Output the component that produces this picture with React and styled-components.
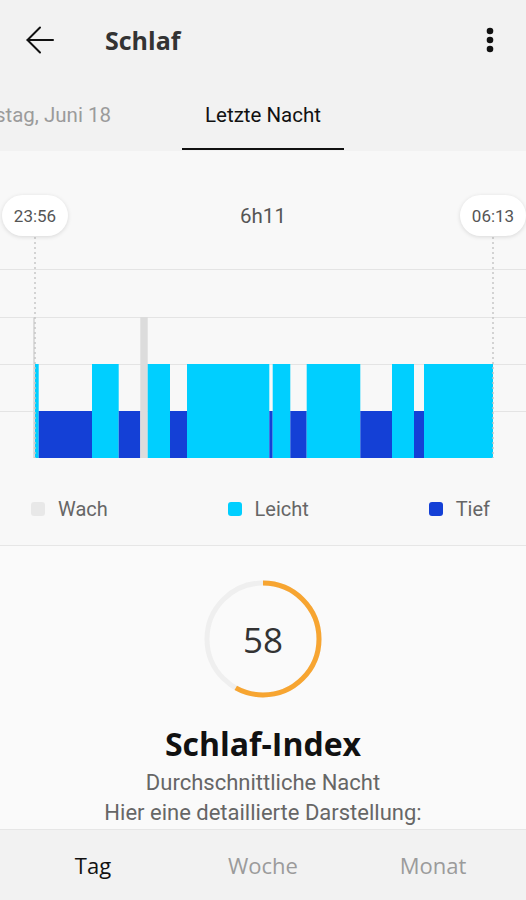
import { styled, createGlobalStyle } from "styled-components";

const GlobalStyle = createGlobalStyle`
    body{
        margin: 0;
        font-family: Roboto, "Liberation Sans", sans-serif;
        background: #f2f2f2;
    }
`;

// sleep phases, x positions in chart pixels
const segments = [
    [33, 35, "wach"],
    [35, 38.7, "light"],
    [38.7, 92, "deep"],
    [92, 118.7, "light"],
    [118.7, 140.3, "deep"],
    [140.3, 147.7, "wach"],
    [147.7, 170, "light"],
    [170, 187, "deep"],
    [187, 269.3, "light"],
    [269.3, 272.7, "deep"],
    [272.7, 290.3, "light"],
    [290.3, 306.7, "deep"],
    [306.7, 360.3, "light"],
    [360.3, 392, "deep"],
    [392, 414, "light"],
    [414, 424, "deep"],
    [424, 493, "light"],
];

const stage = {
    wach: { top: 80, color: "#dcdcdc" },
    light: { top: 127, color: "#00cfff" },
    deep: { top: 174, color: "#1440d6" },
};

const BASE = 221;
const gridLines = [32, 80, 127, 174];
const markers = [
    { x: 35, label: "23:56" },
    { x: 493, label: "06:13" },
];

const legend = [
    { label: "Wach", color: "#e8e8e8" },
    { label: "Leicht", color: "#00cfff" },
    { label: "Tief", color: "#1440d6" },
];

function BackArrow() {
    return (
        <svg width="28" height="28" viewBox="0 0 28 28" fill="none" stroke="#111" strokeWidth="2" strokeLinecap="round" strokeLinejoin="round">
            <path d="M27 14H1.5" />
            <path d="M14 1.5L1.5 14L14 26.5" />
        </svg>
    );
}

function MoreDots() {
    return (
        <svg width="8" height="26" viewBox="0 0 8 26" fill="#111">
            <circle cx="4" cy="4" r="3.3" />
            <circle cx="4" cy="13" r="3.3" />
            <circle cx="4" cy="22" r="3.3" />
        </svg>
    );
}

function SleepChart() {
    return (
        <svg width="526" height="225" viewBox="0 0 526 225" style={{ display: "block" }}>
            {gridLines.map(y => (
                <line key={y} x1="0" x2="526" y1={y + 0.5} y2={y + 0.5} stroke="#e4e4e4" strokeWidth="1" />
            ))}
            {segments.map(([x0, x1, s], i) => (
                <rect key={i} x={x0} y={stage[s].top} width={x1 - x0} height={BASE - stage[s].top} fill={stage[s].color} />
            ))}
            {markers.map(m => (
                <line key={m.x} x1={m.x} x2={m.x} y1="0" y2={BASE} stroke="#c4c4c4" strokeWidth="1.4" strokeDasharray="2 3" />
            ))}
        </svg>
    );
}

function ScoreRing({ value }) {
    const r = 56;
    const c = 2 * Math.PI * r;
    return (
        <RingWrap>
            <svg width="122" height="122" viewBox="0 0 122 122">
                <circle cx="61" cy="61" r={r} fill="none" stroke="#efefef" strokeWidth="5" />
                <circle cx="61" cy="61" r={r} fill="none" stroke="#f7a531" strokeWidth="5"
                    strokeDasharray={`${c * value / 100} ${c}`} transform="rotate(-90 61 61)" />
            </svg>
            <span>{value}</span>
        </RingWrap>
    );
}

export default function App() {
    return (
        <Screen>
            <GlobalStyle />
            <Header>
                <IconButton><BackArrow /></IconButton>
                <Title>Schlaf</Title>
                <IconButton $right><MoreDots /></IconButton>
            </Header>

            <TabBar>
                <TabSide>
                    <Tab>Dienstag, Juni 18</Tab>
                </TabSide>
                <Tab $active>Letzte Nacht</Tab>
                <div></div>
            </TabBar>

            <ChartSection>
                <MarkerRow>
                    <Duration>6h11</Duration>
                    {markers.map(m => (
                        <Pill key={m.label} style={{ left: m.x - 33 }}>{m.label}</Pill>
                    ))}
                </MarkerRow>
                <SleepChart />
                <Legend>
                    {legend.map(l => (
                        <LegendItem key={l.label}>
                            <Swatch $color={l.color} />
                            {l.label}
                        </LegendItem>
                    ))}
                </Legend>
            </ChartSection>

            <Summary>
                <ScoreRing value={58} />
                <SummaryTitle>Schlaf-Index</SummaryTitle>
                <SummaryText>Durchschnittliche Nacht</SummaryText>
                <SummaryText>Hier eine detaillierte Darstellung:</SummaryText>
            </Summary>

            <BottomNav>
                <NavItem $active>Tag</NavItem>
                <NavItem>Woche</NavItem>
                <NavItem>Monat</NavItem>
            </BottomNav>
        </Screen>
    );
}

const Screen = styled.div`
    width: 526px;
    height: 900px;
    display: flex;
    flex-direction: column;
    overflow: hidden;
    background: #f2f2f2;
`;

const Header = styled.header`
    height: 80px;
    display: flex;
    align-items: center;
    padding: 0 32px 0 26px;
    flex-shrink: 0;
`;

const IconButton = styled.div`
    display: flex;
    align-items: center;
    margin-left: ${p => (p.$right ? "auto" : "0")};
`;

const Title = styled.h1`
    margin: 0 0 0 51px;
    font-family: "Open Sans", sans-serif;
    font-weight: 700;
    font-size: 25px;
    color: #333;
`;

const TabBar = styled.nav`
    height: 71px;
    display: grid;
    grid-template-columns: minmax(0, 1fr) 162px minmax(0, 1fr);
    flex-shrink: 0;
    overflow: hidden;
`;

const TabSide = styled.div`
    display: flex;
    justify-content: flex-end;
    padding-right: 71px;
    min-width: 0;
`;

const Tab = styled.div`
    display: flex;
    align-items: center;
    justify-content: center;
    white-space: nowrap;
    font-size: 20.5px;
    color: ${p => (p.$active ? "#111" : "#9b9b9b")};
    border-bottom: 2px solid ${p => (p.$active ? "#111" : "transparent")};
    margin-bottom: 1px;
    padding-top: 2px;
`;

const ChartSection = styled.section`
    background: #f8f8f8;
    padding-top: 44px;
    border-bottom: 1px solid #e6e6e6;
    flex-shrink: 0;
`;

const MarkerRow = styled.div`
    position: relative;
    height: 42px;
    display: flex;
    align-items: center;
    justify-content: center;
`;

const Duration = styled.span`
    font-size: 20.5px;
    color: #555;
`;

const Pill = styled.span`
    position: absolute;
    top: 0;
    width: 66px;
    height: 41px;
    border-radius: 21px;
    background: #fff;
    box-shadow: 0 1px 4px rgba(0, 0, 0, 0.13);
    display: flex;
    align-items: center;
    justify-content: center;
    font-size: 17px;
    color: #555;
`;

const Legend = styled.div`
    height: 73px;
    padding: 10px 36px 0 31px;
    display: flex;
    align-items: center;
    justify-content: space-between;
`;

const LegendItem = styled.div`
    display: flex;
    align-items: center;
    gap: 13px;
    font-size: 20px;
    color: #666;
`;

const Swatch = styled.span`
    width: 14px;
    height: 14px;
    border-radius: 3px;
    background: ${p => p.$color};
`;

const Summary = styled.section`
    flex: 1;
    min-height: 0;
    overflow: hidden;
    background: #fafafa;
    display: flex;
    flex-direction: column;
    align-items: center;
    padding-top: 32px;
`;

const RingWrap = styled.div`
    display: grid;
    place-items: center;

    & > *{
        grid-area: 1 / 1;
    }

    span{
        font-family: "Open Sans", sans-serif;
        font-size: 35px;
        color: #333;
    }
`;

const SummaryTitle = styled.h2`
    margin: 24px 0 4px;
    font-family: "Open Sans", sans-serif;
    font-weight: 700;
    font-size: 32px;
    line-height: 40px;
    color: #111;
`;

const SummaryText = styled.p`
    margin: 0;
    font-size: 22px;
    line-height: 30px;
    white-space: nowrap;
    color: #666;
`;

const BottomNav = styled.nav`
    height: 70px;
    flex-shrink: 0;
    border-top: 1px solid #e6e6e6;
    background: #f2f2f2;
    display: grid;
    grid-template-columns: repeat(3, 1fr);
    padding: 0 8px;
`;

const NavItem = styled.div`
    display: flex;
    align-items: center;
    justify-content: center;
    font-family: "Open Sans", sans-serif;
    font-size: 22px;
    color: ${p => (p.$active ? "#111" : "#9b9b9b")};
`;
